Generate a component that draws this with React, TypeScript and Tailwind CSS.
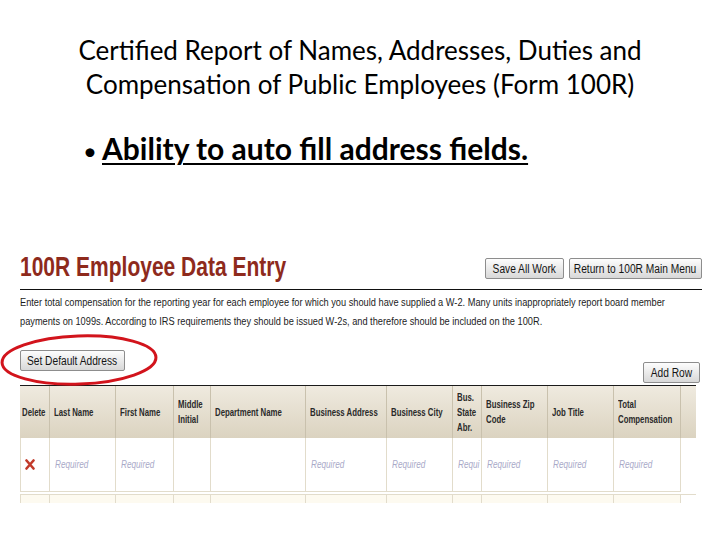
const arial = "font-['Liberation_Sans','Arial',sans-serif]";

const columns = [
  { label: ["Delete"], w: "w-[30px]", body: "" },
  { label: ["Last Name"], w: "w-[66px]", body: "Required" },
  { label: ["First Name"], w: "w-[58px]", body: "Required" },
  { label: ["Middle", "Initial"], w: "w-[37px]", body: "" },
  { label: ["Department Name"], w: "w-[95px]", body: "" },
  { label: ["Business Address"], w: "w-[81px]", body: "Required" },
  { label: ["Business City"], w: "w-[66px]", body: "Required" },
  { label: ["Bus.", "State", "Abr."], w: "w-[29px]", body: "Requi" },
  { label: ["Business Zip", "Code"], w: "w-[66px]", body: "Required" },
  { label: ["Job Title"], w: "w-[66px]", body: "Required" },
  { label: ["Total", "Compensation"], w: "w-[67px]", body: "Required" },
];

// the screenshot's text is set in a narrow face, squeeze Arial to match
function Narrow({ children, className = "" }: { children: React.ReactNode; className?: string }) {
  return <span className={`inline-block whitespace-nowrap ${className}`}>{children}</span>;
}

function WinButton({ children, className = "" }: { children: React.ReactNode; className?: string }) {
  return (
    <button
      className={`flex h-[21px] items-center justify-center rounded-[2px] border border-[#8d8d8d] bg-linear-to-b from-[#fdfdfd] to-[#d8d8d8] text-[12px] leading-none text-[#141414] ${arial} ${className}`}
    >
      <Narrow className="origin-center scale-x-[0.85]">{children}</Narrow>
    </button>
  );
}

function DeleteX() {
  return (
    <svg width="10" height="11" viewBox="0 0 10 11">
      <path d="M1.5 1.5 L8.5 9.5 M8.5 1.5 L1.5 9.5" stroke="#c23a2a" strokeWidth="2.6" strokeLinecap="round" />
    </svg>
  );
}

function DataTable() {
  return (
    <div className="h-[118px] overflow-hidden border-t border-[#1a1a1a]">
      <div className="flex h-[52px]">
        {columns.map((c, i) => (
          <div
            key={i}
            className={`${c.w} flex h-full shrink-0 flex-col items-start justify-center overflow-hidden border-r border-[#c9c1ad] bg-linear-to-b from-[#efeadf] to-[#dbd3c0] ${i === 0 ? "pl-[2px]" : "pl-[4px]"} text-[10px] leading-[15px] font-bold text-[#2a2a2a] ${arial}`}
          >
            {c.label.map((l) => (
              <Narrow key={l} className="origin-left scale-x-[0.78]">
                {l}
              </Narrow>
            ))}
          </div>
        ))}
        <div className="h-full w-[15px] shrink-0 bg-linear-to-b from-[#efeadf] to-[#dbd3c0]" />
      </div>
      <div className="flex h-[54px]">
        {columns.map((c, i) => (
          <div
            key={i}
            className={`${c.w} flex h-full shrink-0 items-center overflow-hidden border-r border-b border-[#e2dccb] bg-white ${i === 0 ? "border-l pl-[4px]" : "pl-[5px]"} text-[10px] italic text-[#a9a9c8] ${arial}`}
          >
            {i === 0 ? <DeleteX /> : <Narrow className="origin-left scale-x-[0.82]">{c.body}</Narrow>}
          </div>
        ))}
      </div>
      <div className="mt-[2px] flex h-[30px] border-t border-[#e2dccb]">
        {columns.map((c, i) => (
          <div
            key={i}
            className={`${c.w} h-full shrink-0 border-r border-[#e2dccb] bg-[#fdfaf0] ${i === 0 ? "border-l" : ""}`}
          />
        ))}
      </div>
    </div>
  );
}

function Screenshot() {
  return (
    <div className="mt-[84px] w-[702px] pl-[20px]">
      <div className="flex h-[28px] items-start justify-between">
        <h1 className={`text-[28px] leading-[28px] font-bold text-[#8e2a1c] ${arial}`}>
          <Narrow className="origin-left scale-x-[0.75]">100R Employee Data Entry</Narrow>
        </h1>
        <div className="mt-[5px] flex gap-[5px]">
          <WinButton className="w-[79px]">Save All Work</WinButton>
          <WinButton className="w-[133px]">Return to 100R Main Menu</WinButton>
        </div>
      </div>
      <div className="mt-[8px] border-t border-[#111]" />
      <div className={`mt-[3px] flex flex-col items-start text-[11px] leading-[19px] text-[#1c1c1c] ${arial}`}>
        <Narrow className="origin-left scale-x-[0.84]">
          Enter total compensation for the reporting year for each employee for which you should have supplied a W-2.
          Many units inappropriately report board member
        </Narrow>
        <Narrow className="origin-left scale-x-[0.84]">
          payments on 1099s. According to IRS requirements they should be issued W-2s, and therefore should be included
          on the 100R.
        </Narrow>
      </div>
      <div className="mt-[19px] flex h-[33px] items-start justify-between pr-[2px]">
        <WinButton className="w-[105px]">Set Default Address</WinButton>
        <WinButton className="mt-[12px] w-[57px]">Add Row</WinButton>
      </div>
      <div className="mt-[2px] w-[676px]">
        <DataTable />
      </div>
    </div>
  );
}

export default function App() {
  return (
    <div className="relative h-[540px] w-[720px] overflow-hidden bg-white">
      <div className="pt-[33px] text-center font-['Lato',sans-serif] text-[26px] leading-[34px] text-black">
        <p>Certified Report of Names, Addresses, Duties and</p>
        <p>Compensation of Public Employees (Form 100R)</p>
      </div>
      <div className="mt-[29px] flex items-baseline pl-[83px] font-['Lato',sans-serif] text-[30px] leading-[36px] text-black">
        <span className="w-[19px] shrink-0 text-[24px]">•</span>
        <span className="font-bold underline decoration-[2px] underline-offset-[3px]">
          Ability to auto fill address fields.
        </span>
      </div>
      <Screenshot />
      <svg className="absolute left-0 top-[333px]" width="162" height="56" viewBox="0 0 162 56">
        <ellipse cx="79" cy="27" rx="77" ry="24" fill="none" stroke="#d2141c" strokeWidth="3" transform="rotate(-2 79 27)" />
      </svg>
    </div>
  );
}
